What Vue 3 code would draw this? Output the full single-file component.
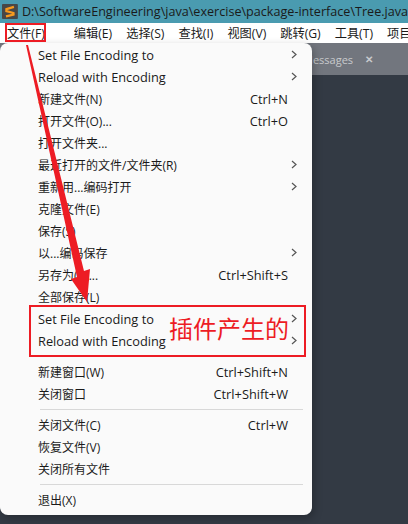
<template>
  <div class="page">
    <div class="title-bar">
      <svg class="logo" width="18" height="17" viewBox="0 0 18 17">
        <rect width="18" height="17" rx="1" fill="#474747" />
        <path d="M13.5 3.2 L5 5.8 L5 8 L13 10.2 L13 12 L4.5 14" fill="none" stroke="#f79a1e" stroke-width="2.6" />
      </svg>
      <span class="title-text">D:\SoftwareEngineering\java\exercise\package-interface\Tree.java</span>
    </div>

    <div class="menu-bar">
      <span v-for="m in menus" :key="m" class="menu-name">{{ m }}</span>
    </div>

    <div class="workspace">
      <div class="tab-strip">
        <span class="tab-label">Messages</span>
        <span class="tab-close">✕</span>
      </div>
      <div class="editor"></div>
    </div>

    <div class="file-menu">
      <template v-for="(row, i) in rows" :key="i">
        <div v-if="row.sep" class="sep"></div>
        <div v-else class="row">
          <span :class="{ latin: row.latin }">{{ row.label }}</span>
          <span v-if="row.key" class="key">{{ row.key }}</span>
          <svg v-if="row.sub" class="chev" width="6" height="9" viewBox="0 0 6 9">
            <path d="M1 1 L5 4.5 L1 8" fill="none" stroke="#555" stroke-width="1.2" />
          </svg>
        </div>
      </template>
    </div>

    <!-- annotations on top of the screenshot -->
    <div class="mark mark-file"></div>
    <div class="mark mark-plugin"></div>
    <span class="plugin-note">插件产生的</span>
    <svg class="arrow" width="408" height="524" viewBox="0 0 408 524">
      <path d="M26 45 L28 45 L84 271 L90 269 L87 302 L71 279 L77 277 Z" fill="#ed1c24" />
    </svg>
  </div>
</template>

<script setup>
const menus = ['文件(F)', '编辑(E)', '选择(S)', '查找(I)', '视图(V)', '跳转(G)', '工具(T)', '项目']

const rows = [
  { label: 'Set File Encoding to', sub: true, latin: true },
  { label: 'Reload with Encoding', sub: true, latin: true },
  { label: '新建文件(N)', key: 'Ctrl+N' },
  { label: '打开文件(O)...', key: 'Ctrl+O' },
  { label: '打开文件夹...' },
  { label: '最近打开的文件/文件夹(R)', sub: true },
  { label: '重新用...编码打开', sub: true },
  { label: '克隆文件(E)' },
  { label: '保存(S)' },
  { label: '以...编码保存', sub: true },
  { label: '另存为(A)...', key: 'Ctrl+Shift+S' },
  { label: '全部保存(L)' },
  { label: 'Set File Encoding to', sub: true, latin: true },
  { label: 'Reload with Encoding', sub: true, latin: true },
  { sep: true },
  { label: '新建窗口(W)', key: 'Ctrl+Shift+N' },
  { label: '关闭窗口', key: 'Ctrl+Shift+W' },
  { sep: true },
  { label: '关闭文件(C)', key: 'Ctrl+W' },
  { label: '恢复文件(V)' },
  { label: '关闭所有文件' },
  { sep: true },
  { label: '退出(X)' },
]
</script>

<style>
body {
  margin: 0;
  overflow: hidden;
}
</style>

<style scoped>
.page {
  position: relative;
  width: 408px;
  height: 524px;
  overflow: hidden;
  display: flex;
  flex-direction: column;
  background: #333a44;
  font-family: "Open Sans", "Noto Sans CJK SC", sans-serif;
  color: #1a1a1a;
}

.title-bar {
  height: 23px;
  flex: none;
  display: flex;
  align-items: center;
  gap: 4px;
  padding-left: 2px;
  background: #4a9bb0;
  font-size: 12.6px;
  white-space: nowrap;
}

.menu-bar {
  height: 20px;
  flex: none;
  display: flex;
  align-items: center;
  gap: 14px;
  padding-left: 7px;
  background: #fff;
  font-size: 12.2px;
  white-space: nowrap;
}

.menu-name:first-child {
  margin-right: 15px;
}

.workspace {
  flex: 1;
  display: flex;
  flex-direction: column;
}

.tab-strip {
  height: 32px;
  display: flex;
  align-items: center;
  padding-left: 303px;
  gap: 12px;
  background: #72767e;
  color: #c8cacd;
  font-size: 11px;
}

.tab-close {
  font-size: 10px;
  font-weight: 700;
}

.editor {
  flex: 1;
  background: #333a44;
}

.file-menu {
  position: absolute;
  left: 0;
  top: 43px;
  width: 312px;
  height: 472px;
  box-sizing: border-box;
  padding-top: 1px;
  background: #fafafa;
  border-radius: 8px;
  box-shadow: 2px 3px 8px rgba(0, 0, 0, 0.25);
  font-size: 12px;
}

.row {
  position: relative;
  height: 22px;
  display: flex;
  align-items: center;
  justify-content: space-between;
  padding: 0 24px 0 38px;
  white-space: nowrap;
}

.latin,
.key {
  font-size: 12.8px;
}

.chev {
  position: absolute;
  right: 15px;
  top: 6px;
}

.sep {
  height: 1px;
  margin: 4px 9px 4px 40px;
  background: #d8d8d8;
}

.mark {
  position: absolute;
  box-sizing: border-box;
  border: 2px solid #ed1c24;
}

.mark-file {
  left: 5px;
  top: 23px;
  width: 41px;
  height: 19px;
}

.mark-plugin {
  left: 29px;
  top: 305px;
  width: 277px;
  height: 52px;
}

.plugin-note {
  position: absolute;
  left: 169px;
  top: 313px;
  color: #ed1c24;
  font-size: 24px;
  line-height: 32px;
  white-space: nowrap;
}

.arrow {
  position: absolute;
  left: 0;
  top: 0;
  pointer-events: none;
}
</style>
